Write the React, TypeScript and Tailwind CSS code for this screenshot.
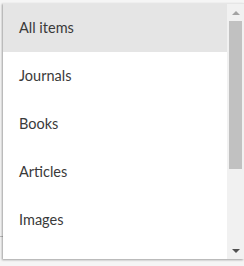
const items = ["All items", "Journals", "Books", "Articles", "Images"];

export default function App() {
  return (
    <div className="relative w-[244px] h-[266px] bg-[#f5f5f5] overflow-hidden pt-[3px] pl-[3px]">
      {/* edge of the field underneath */}
      <div className="absolute left-0 top-[236px] w-[4px] h-px bg-[#bdbdbd]" />
      <div className="relative flex w-[241px] h-[256px] bg-white border-t border-[#e6e6e6] shadow-[-1px_1px_2px_rgba(0,0,0,0.35)]">
        <ul className="flex-1" style={{ fontFamily: "Lato, 'Open Sans', sans-serif" }}>
          {items.map((item, i) => (
            <li
              key={item}
              className={
                "h-[48px] flex items-center pl-[16px] text-[14.5px] text-[#3a3a3a] " +
                (i === 0 ? "bg-[#e5e5e5]" : "")
              }
            >
              {item}
            </li>
          ))}
        </ul>
        <div className="w-[17px] h-full bg-[#f1f1f1] flex flex-col items-center">
          <div className="h-[17px] flex items-center justify-center">
            <div className="w-0 h-0 border-l-[4px] border-r-[4px] border-b-[4px] border-l-transparent border-r-transparent border-b-[#a3a3a3]" />
          </div>
          <div className="w-[13px] h-[148px] bg-[#c1c1c1]" />
          <div className="flex-1" />
          <div className="h-[17px] flex items-center justify-center">
            <div className="w-0 h-0 border-l-[4px] border-r-[4px] border-t-[4px] border-l-transparent border-r-transparent border-t-[#505050]" />
          </div>
        </div>
      </div>
    </div>
  );
}
